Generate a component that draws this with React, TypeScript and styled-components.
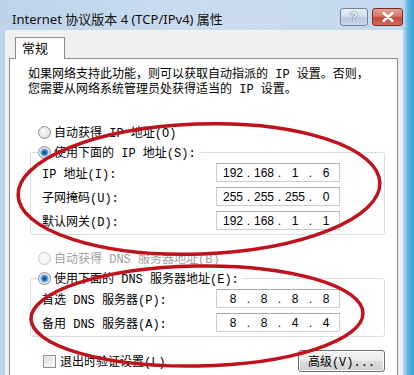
import React from "react";
import styled, { createGlobalStyle } from "styled-components";

const GlobalStyle = createGlobalStyle`
  html, body { margin: 0; padding: 0; background: #ffffff; }
  body { font-family: "Liberation Mono", "Noto Sans CJK SC", monospace; }
`;

const ipGroup = [
  { label: "IP 地址(I):", value: ["192", "168", "1", "6"] },
  { label: "子网掩码(U):", value: ["255", "255", "255", "0"] },
  { label: "默认网关(D):", value: ["192", "168", "1", "1"] },
];

const dnsGroup = [
  { label: "首选 DNS 服务器(P):", value: ["8", "8", "8", "8"] },
  { label: "备用 DNS 服务器(A):", value: ["8", "8", "4", "4"] },
];

const App = () => (
  <>
    <GlobalStyle />
    <Window>
      <TitleBar>
        <Title>Internet 协议版本 4 (TCP/IPv4) 属性</Title>
        <CaptionButtons>
          <HelpButton>?</HelpButton>
          <CloseButton>
            <svg width="12" height="10" viewBox="0 0 12 10">
              <path d="M1.5 1 L10.5 9 M10.5 1 L1.5 9" stroke="#ffffff" strokeWidth="2.6" strokeLinecap="round" />
            </svg>
          </CloseButton>
        </CaptionButtons>
      </TitleBar>
      <Client>
        <TabStrip>
          <Tab>常规</Tab>
        </TabStrip>
        <Panel>
          <Description>
            如果网络支持此功能，则可以获取自动指派的 IP 设置。否则，
            <br />
            您需要从网络系统管理员处获得适当的 IP 设置。
          </Description>

          <OptionRow $top={26}>
            <Radio />
            <span>自动获得 IP 地址(O)</span>
          </OptionRow>

          <GroupBox>
            <Legend>
              <Radio $checked />
              <span>使用下面的 IP 地址(S):</span>
            </Legend>
            <Fields>
              {ipGroup.map((row) => (
                <FieldRow key={row.label}>
                  <span>{row.label}</span>
                  <IpField parts={row.value} />
                </FieldRow>
              ))}
            </Fields>
          </GroupBox>

          <OptionRow $top={15} $disabled>
            <Radio $disabled />
            <span>自动获得 DNS 服务器地址(B)</span>
          </OptionRow>

          <GroupBox>
            <Legend>
              <Radio $checked />
              <span>使用下面的 DNS 服务器地址(E):</span>
            </Legend>
            <Fields>
              {dnsGroup.map((row) => (
                <FieldRow key={row.label}>
                  <span>{row.label}</span>
                  <IpField parts={row.value} />
                </FieldRow>
              ))}
            </Fields>
          </GroupBox>

          <BottomRow>
            <CheckLabel>
              <Checkbox />
              <span>退出时验证设置(L)</span>
            </CheckLabel>
            <Button>高级(V)...</Button>
          </BottomRow>
        </Panel>
      </Client>

      <Marks width="414" height="375" viewBox="0 0 414 375">
        <ellipse cx="199" cy="189" rx="181" ry="65" transform="rotate(-2 199 189)" />
        <ellipse cx="197" cy="316" rx="166" ry="50" transform="rotate(-1 197 316)" />
      </Marks>
    </Window>
  </>
);

const IpField = ({ parts }: { parts: string[] }) => (
  <Field>
    {parts.map((p, i) => (
      <React.Fragment key={i}>
        {i > 0 && <Dot>.</Dot>}
        <Octet>{p}</Octet>
      </React.Fragment>
    ))}
  </Field>
);

export default App;

const Window = styled.div`
  position: relative;
  width: 414px;
  height: 375px;
  overflow: hidden;
  display: flex;
  flex-direction: column;
  background: linear-gradient(
    90deg,
    #bdd3ea 0px,
    #cadcf0 200px,
    #c4d9ee 402px,
    #b4d6f0 404px,
    #5ab4e0 408px,
    #3aa2d8 414px
  );
`;

const TitleBar = styled.div`
  height: 30px;
  box-sizing: border-box;
  padding: 6px 11px 0 12px;
  display: flex;
  align-items: center;
  justify-content: space-between;
`;

const Title = styled.div`
  font-family: "Noto Sans", "Noto Sans CJK SC", sans-serif;
  font-size: 13px;
  color: #111111;
`;

const CaptionButtons = styled.div`
  display: flex;
  gap: 4px;
  margin-top: -3px;
`;

const CaptionButton = styled.div`
  height: 18px;
  box-sizing: border-box;
  border-radius: 3px;
  display: flex;
  align-items: center;
  justify-content: center;
`;

const HelpButton = styled(CaptionButton)`
  width: 28px;
  border: 1px solid #72839b;
  background: linear-gradient(180deg, #e6eef7 0%, #d2dfee 45%, #b7c9de 55%, #c9d8ea 100%);
  color: #ffffff;
  font-family: "Liberation Sans", sans-serif;
  font-weight: bold;
  font-size: 13px;
  text-shadow: 0 0 1px #344860, 0 0 1px #344860;
`;

const CloseButton = styled(CaptionButton)`
  width: 31px;
  border: 1px solid #7a2a24;
  background: linear-gradient(180deg, #e3a093 0%, #d57a6a 45%, #c2463a 55%, #d0705e 100%);
`;

const Client = styled.div`
  flex: 1;
  margin: 0 11px 0 5px;
  padding: 7px 5px 0 4px;
  background: #f0f0f0;
  display: flex;
  flex-direction: column;
`;

const TabStrip = styled.div`
  display: flex;
  padding-left: 6px;
  position: relative;
  z-index: 1;
`;

const Tab = styled.div`
  width: 50px;
  height: 22px;
  box-sizing: border-box;
  margin-bottom: -1px;
  border: 1px solid #898c95;
  border-bottom: none;
  background: #ffffff;
  font-family: "Noto Sans CJK SC", sans-serif;
  font-size: 13px;
  line-height: 20px;
  padding-left: 6px;
  color: #000000;
`;

const Panel = styled.div`
  flex: 1;
  background: #ffffff;
  border: 1px solid #898c95;
  border-bottom: none;
  padding: 0 12px 0 0;
  font-size: 12px;
  color: #000000;
  display: flex;
  flex-direction: column;
`;

const Description = styled.div`
  margin: 9px 0 0 18px;
  line-height: 15px;
  white-space: nowrap;
`;

const OptionRow = styled.div<{ $top: number; $disabled?: boolean }>`
  margin: ${(p) => p.$top}px 0 0 28px;
  height: 16px;
  display: flex;
  align-items: center;
  gap: 3px;
  color: ${(p) => (p.$disabled ? "#a0a0a0" : "#000000")};
`;

const Radio = styled.span<{ $checked?: boolean; $disabled?: boolean }>`
  width: 13px;
  height: 13px;
  flex: none;
  box-sizing: border-box;
  border-radius: 50%;
  border: 1px solid ${(p) => (p.$disabled ? "#c8c8c8" : "#8c8e8f")};
  background: ${(p) =>
    p.$checked
      ? "radial-gradient(circle at 50% 50%, #163f6e 0, #2a6fb4 2px, #6eaee6 3.5px, #e6e6e6 4.5px, #f6f6f6 100%)"
      : p.$disabled
      ? "radial-gradient(circle at 40% 40%, #fbfbfb 0, #eeeeee 100%)"
      : "radial-gradient(circle at 40% 40%, #ffffff 0, #e4e4e4 60%, #cdcdcd 100%)"};
`;

const GroupBox = styled.fieldset`
  margin: 4px 0 0 20px;
  padding: 0 0 4px 0;
  border: 1px solid #d5dfe5;
  border-radius: 3px;
  min-width: 0;
`;

const Legend = styled.legend`
  margin-left: 7px;
  padding: 0 3px 0 0;
  height: 16px;
  display: flex;
  align-items: center;
  gap: 3px;
`;

const Fields = styled.div`
  padding-top: 3px;
  display: flex;
  flex-direction: column;
  gap: 5px;
`;

const FieldRow = styled.div`
  display: grid;
  grid-template-columns: 174px 124px;
  align-items: center;
  padding-left: 11px;
`;

const Field = styled.div`
  height: 19px;
  box-sizing: border-box;
  border: 1px solid #c9cdd3;
  border-top-color: #abadb3;
  background: #ffffff;
  display: flex;
  align-items: center;
  padding-left: 3px;
  font-family: "Liberation Sans", sans-serif;
  font-size: 12px;
`;

const Octet = styled.span`
  width: 26px;
  text-align: center;
`;

const Dot = styled.span`
  width: 5px;
  text-align: center;
`;

const BottomRow = styled.div`
  margin: 13px 0 0 33px;
  height: 22px;
  display: flex;
  align-items: center;
  justify-content: space-between;
`;

const CheckLabel = styled.div`
  display: flex;
  align-items: center;
  gap: 4px;
`;

const Checkbox = styled.span`
  width: 13px;
  height: 13px;
  box-sizing: border-box;
  border: 1px solid #8f8f8f;
  background: linear-gradient(135deg, #d8d8d8 0%, #f4f4f4 70%, #ffffff 100%);
  box-shadow: inset 0 0 0 1px #f4f4f4;
`;

const Button = styled.div`
  width: 87px;
  height: 22px;
  box-sizing: border-box;
  border: 1px solid #707070;
  border-radius: 3px;
  background: linear-gradient(180deg, #f2f2f2 0%, #ebebeb 50%, #dddddd 51%, #cfcfcf 100%);
  box-shadow: inset 0 0 0 1px #fcfcfc;
  display: flex;
  align-items: center;
  justify-content: center;
  font-size: 12px;
`;

const Marks = styled.svg`
  position: absolute;
  left: 0;
  top: 0;
  pointer-events: none;
  fill: none;
  stroke: #bf121b;
  stroke-width: 3.5;
`;
